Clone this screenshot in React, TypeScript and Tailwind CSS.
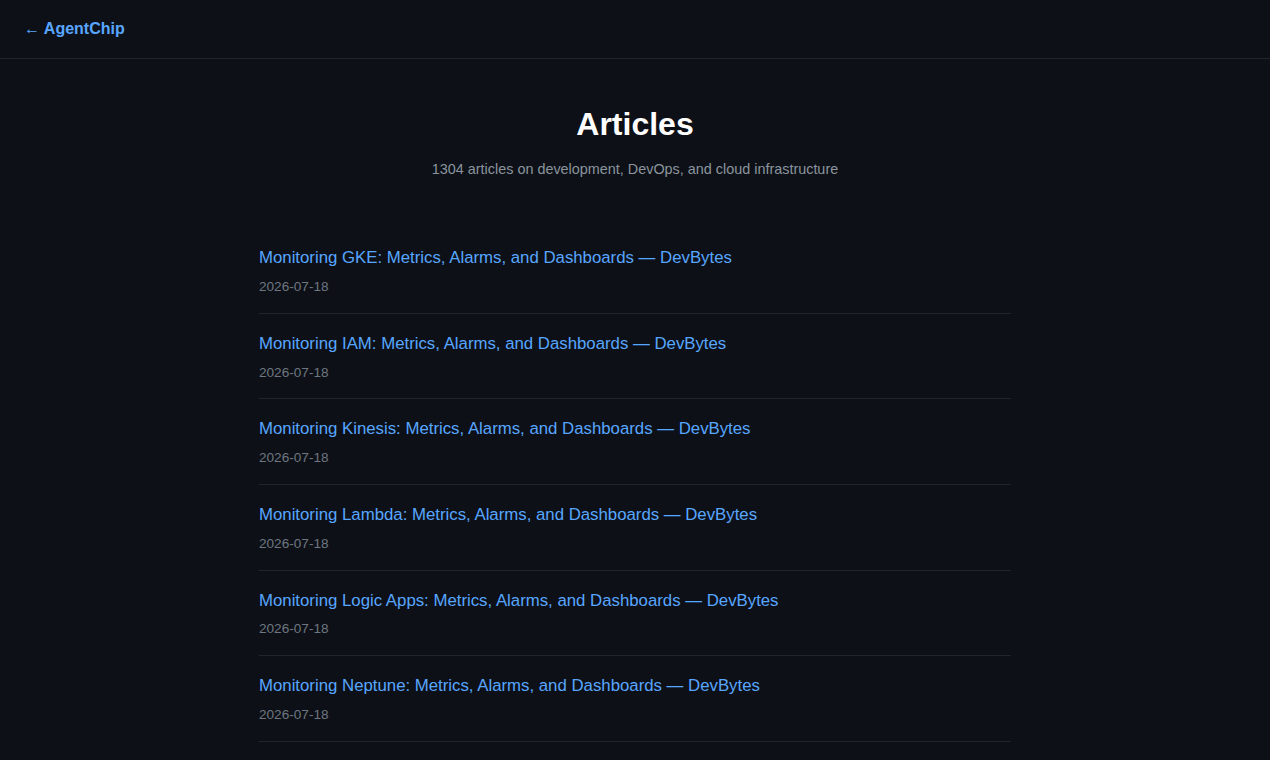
import React from 'react'

const articles = [
  'Monitoring GKE: Metrics, Alarms, and Dashboards — DevBytes',
  'Monitoring IAM: Metrics, Alarms, and Dashboards — DevBytes',
  'Monitoring Kinesis: Metrics, Alarms, and Dashboards — DevBytes',
  'Monitoring Lambda: Metrics, Alarms, and Dashboards — DevBytes',
  'Monitoring Logic Apps: Metrics, Alarms, and Dashboards — DevBytes',
  'Monitoring Neptune: Metrics, Alarms, and Dashboards — DevBytes',
]

export default function App() {
  return (
    <div className="min-h-screen bg-[#0d1117] text-[#e6edf3] font-['Liberation_Sans',Arial,sans-serif]">
      <header className="h-[59px] border-b border-[#21262d] flex items-center px-6">
        <a href="#" className="text-[#58a6ff] font-bold text-base">
          ← AgentChip
        </a>
      </header>

      <main className="max-w-[800px] mx-auto px-6 pt-[45px]">
        <h1 className="text-center text-[32px] leading-[40px] font-bold text-white">Articles</h1>
        <p className="text-center text-[14.4px] leading-[22px] text-[#8b949e] mt-[14px]">
          1304 articles on development, DevOps, and cloud infrastructure
        </p>

        <ul className="mt-[48px]">
          {articles.map((title) => (
            <li key={title} className="border-b border-[#21262d] pt-[17px] pb-[15px]">
              <a href="#" className="block text-[16.8px] leading-[1.6] text-[#58a6ff]">
                {title}
              </a>
              <div className="mt-1 text-[13.6px] leading-[1.6] text-[#6e7681]">2026-07-18</div>
            </li>
          ))}
        </ul>
      </main>
    </div>
  )
}
